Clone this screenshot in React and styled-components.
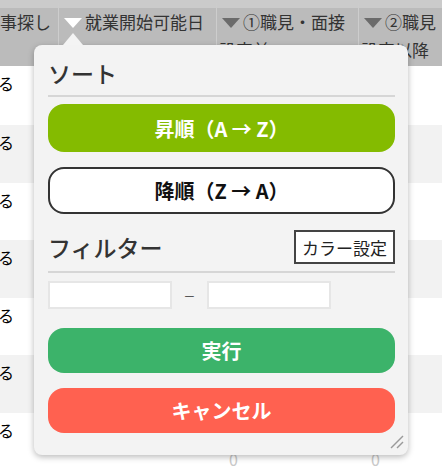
import React from 'react';
import styled, { createGlobalStyle } from 'styled-components';

const GlobalStyle = createGlobalStyle`
  body {
    margin: 0;
    background: #fff;
    font-family: "Noto Sans CJK JP", "Noto Sans", sans-serif;
    overflow: hidden;
  }
`;

const Page = styled.div`
  position: relative;
  width: 442px;
  height: 467px;
  overflow: hidden;
`;

const Table = styled.div`
  display: grid;
  grid-template-columns: 58px 158px 142px 142px;
  width: 500px;
`;

const HeaderCell = styled.div`
  height: 66px;
  box-sizing: border-box;
  background: #bbbbbb;
  border-top: 8px solid #cbcbcb;
  border-left: ${({ $first }) => ($first ? 'none' : '1px solid #cdcdcd')};
  padding-left: 2px;
  font-size: 17px;
  line-height: 28px;
  color: #333;
  white-space: nowrap;
  overflow: hidden;
`;

const Clipped = styled.span`
  display: inline-block;
  margin-left: ${({ $shift }) => $shift}px;
`;

const Triangle = styled.span`
  display: inline-block;
  width: 0;
  height: 0;
  margin: 0 3px 0 3px;
  border-left: 9.5px solid transparent;
  border-right: 9.5px solid transparent;
  border-top: 10px solid ${({ $active }) => ($active ? '#ffffff' : '#6b6b6b')};
  vertical-align: 1px;
`;

const BodyCell = styled.div`
  height: ${({ $first }) => ($first ? '59px' : '57.6px')};
  box-sizing: border-box;
  background: ${({ $stripe }) => ($stripe ? '#f2f2f2' : '#ffffff')};
  font-size: 16px;
  line-height: 24px;
  padding: ${({ $muted }) => ($muted ? '34px 0 0 13px' : '5px 0 0 0')};
  color: ${({ $muted }) => ($muted ? '#c9c9c9' : '#000')};
  overflow: hidden;
`;

const Popup = styled.div`
  position: absolute;
  left: 34px;
  top: 45px;
  width: 374px;
  height: 410px;
  box-sizing: border-box;
  padding: 13px 13px 0 14px;
  background: #f3f3f3;
  border-radius: 8px;
  box-shadow: 0 2px 6px rgba(0, 0, 0, 0.28);
  display: flex;
  flex-direction: column;
`;

const Caret = styled.div`
  position: absolute;
  left: 29px;
  top: -12px;
  width: 0;
  height: 0;
  border-left: 10px solid transparent;
  border-right: 10px solid transparent;
  border-bottom: 12px solid #f4f4f4;
`;

const SectionTitle = styled.div`
  font-size: 23px;
  font-weight: 500;
  line-height: 30px;
  color: #333;
`;

const Divider = styled.div`
  height: 2px;
  margin-top: ${({ $top }) => $top}px;
  background: #d6d6d6;
`;

const PillButton = styled.button`
  display: flex;
  align-items: center;
  justify-content: center;
  width: 100%;
  height: ${({ $h }) => $h}px;
  margin-top: ${({ $top }) => $top}px;
  box-sizing: border-box;
  border-radius: 16px;
  border: ${({ $outline }) => ($outline ? '2px solid #333' : 'none')};
  background: ${({ $bg }) => $bg};
  color: ${({ $outline }) => ($outline ? '#111' : '#fff')};
  font-family: "Noto Sans CJK JP", "Noto Sans", sans-serif;
  font-size: 20px;
  font-weight: 700;
  padding: 0;
`;

const FilterHead = styled.div`
  display: flex;
  align-items: center;
  justify-content: space-between;
  margin-top: 16px;
  height: 34px;
`;

const ColorButton = styled.button`
  height: 34px;
  width: 101px;
  box-sizing: border-box;
  padding: 0;
  background: #fff;
  border: 2px solid #444;
  font-family: "Noto Sans CJK JP", "Noto Sans", sans-serif;
  font-size: 17px;
  color: #222;
`;

const RangeRow = styled.div`
  display: flex;
  align-items: center;
  margin-top: 8px;
  height: 28px;
`;

const RangeInput = styled.input`
  width: 124px;
  height: 28px;
  box-sizing: border-box;
  border: 2px solid #e6e6e6;
  background: #fff;
  margin: 0;
  padding: 0 4px;
  outline: none;
`;

const Dash = styled.span`
  width: 35px;
  text-align: center;
  font-size: 11px;
  line-height: 28px;
  color: #333;
`;

const Grip = styled.svg`
  position: absolute;
  right: 4px;
  bottom: 6px;
`;

const headers = [
  { label: '仕事探し', shift: -19 },
  { label: '就業開始可能日', tri: true, active: true },
  { label: '①職見・面接', second: '設定前', tri: true },
  { label: '②職見', second: '設定以降', tri: true },
];

const rows = [0, 1, 2, 3, 4, 5, 6];

const App = () => {
  return (
    <Page>
      <GlobalStyle />
      <Table>
        {headers.map((h, i) => (
          <HeaderCell key={i} $first={i === 0}>
            {h.shift ? (
              <Clipped $shift={h.shift}>{h.label}</Clipped>
            ) : (
              <>
                {h.tri && <Triangle $active={h.active} />}
                {h.label}
                {h.second && (
                  <>
                    <br />
                    {h.second}
                  </>
                )}
              </>
            )}
          </HeaderCell>
        ))}
        {rows.map((r) => (
          <React.Fragment key={r}>
            <BodyCell $first={r === 0} $stripe={r % 2 === 1}>
              <Clipped $shift={-2}>る</Clipped>
            </BodyCell>
            <BodyCell $first={r === 0} $stripe={r % 2 === 1} />
            <BodyCell $first={r === 0} $stripe={r % 2 === 1} $muted>
              0
            </BodyCell>
            <BodyCell $first={r === 0} $stripe={r % 2 === 1} $muted>
              0
            </BodyCell>
          </React.Fragment>
        ))}
      </Table>

      <Popup>
        <Caret />
        <SectionTitle>ソート</SectionTitle>
        <Divider $top={7} />
        <PillButton $h={48} $top={7} $bg="#84bb00">
          昇順（A → Z）
        </PillButton>
        <PillButton $h={47} $top={15} $bg="#fff" $outline>
          降順（Z → A）
        </PillButton>
        <FilterHead>
          <SectionTitle>フィルター</SectionTitle>
          <ColorButton>カラー設定</ColorButton>
        </FilterHead>
        <Divider $top={7} />
        <RangeRow>
          <RangeInput type="text" />
          <Dash>—</Dash>
          <RangeInput type="text" />
        </RangeRow>
        <PillButton $h={45} $top={19} $bg="#3cb36a">
          実行
        </PillButton>
        <PillButton $h={45} $top={15} $bg="#ff6150">
          キャンセル
        </PillButton>
        <Grip width="14" height="14" viewBox="0 0 14 14">
          <line x1="1" y1="13" x2="13" y2="1" stroke="#9a9a9a" strokeWidth="1.4" />
          <line x1="7" y1="13" x2="13" y2="7" stroke="#9a9a9a" strokeWidth="1.4" />
        </Grip>
      </Popup>
    </Page>
  );
};

export default App;
